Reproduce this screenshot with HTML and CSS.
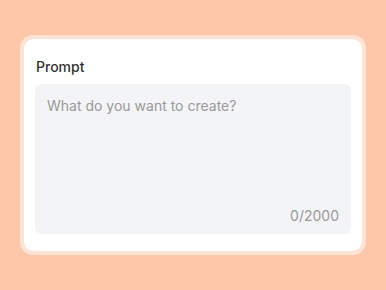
FILE: index.html
```html
<!DOCTYPE html>
<html>
<head>
<meta charset="utf-8">
<link rel="stylesheet" href="styles.css">
</head>
<body>
<div class="stage">
  <div class="card">
    <label class="label" for="prompt">Prompt</label>
    <div class="field">
      <textarea id="prompt" class="input" placeholder="What do you want to create?"></textarea>
      <div class="counter">0/2000</div>
    </div>
  </div>
</div>
</body>
</html>
```

FILE: styles.css
```css
html, body {
  margin: 0;
  padding: 0;
}
body {
  background: #ffc7a9;
  font-family: Inter, "Noto Sans", sans-serif;
  width: 386px;
  height: 290px;
  overflow: hidden;
}
.stage {
  height: 290px;
  display: flex;
  align-items: center;
  justify-content: center;
}
.card {
  box-sizing: border-box;
  width: 346px;
  height: 220px;
  background: #fff;
  background-clip: padding-box;
  border: 4px solid rgba(255, 255, 255, 0.5);
  border-radius: 13px;
  padding: 18px 11px 17px;
  display: flex;
  flex-direction: column;
}
.label {
  font-size: 14px;
  line-height: 20px;
  font-weight: 500;
  color: #333333;
  padding-left: 1px;
}
.field {
  margin-top: 7px;
  flex: 1;
  background: #f3f4f6;
  border-radius: 6px;
  padding: 12px 12px 8px;
  display: flex;
  flex-direction: column;
}
.input {
  flex: 1;
  border: none;
  outline: none;
  resize: none;
  background: transparent;
  padding: 0;
  margin: 0;
  font-family: inherit;
  font-size: 14px;
  line-height: 20px;
  color: #333333;
}
.input::placeholder {
  color: #999999;
}
.counter {
  text-align: right;
  font-size: 14px;
  line-height: 20px;
  color: #999999;
}
```
